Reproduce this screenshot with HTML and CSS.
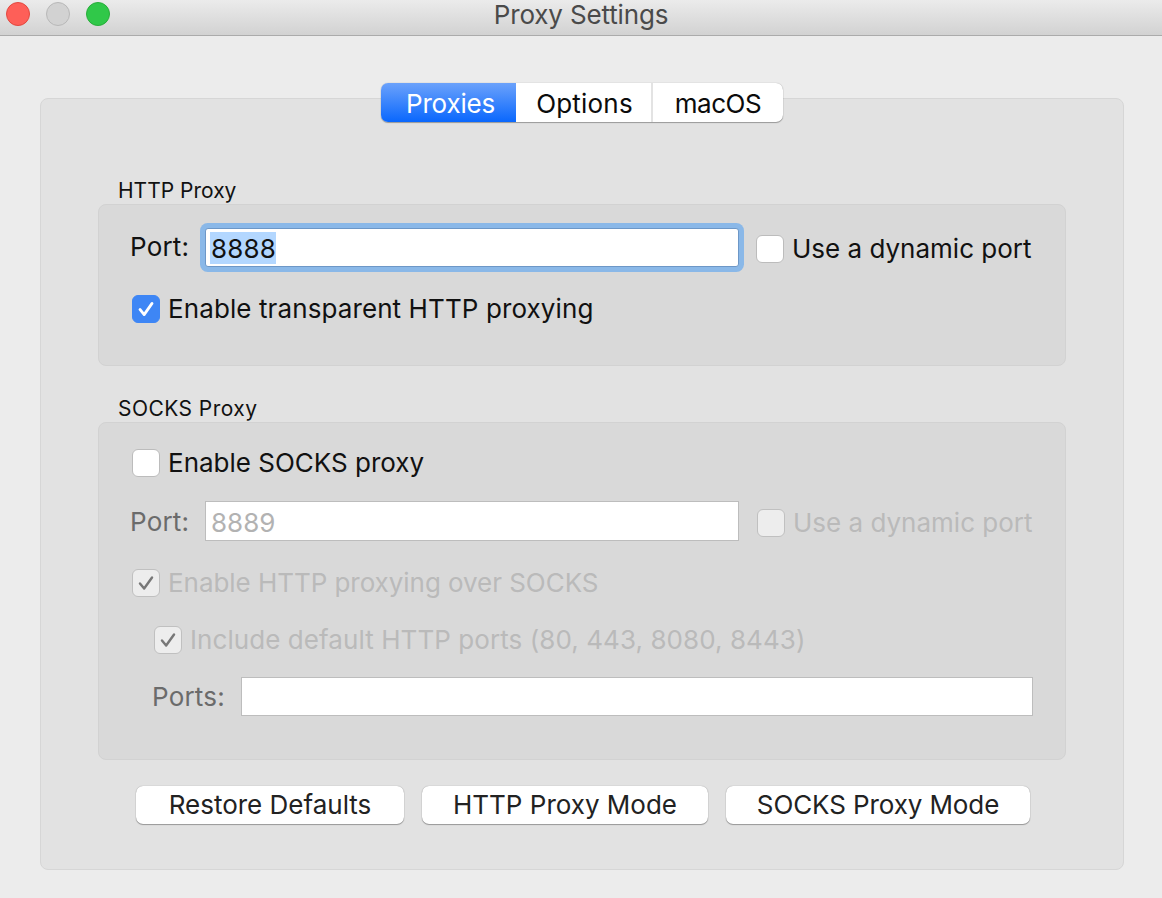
FILE: index.html
```html
<!DOCTYPE html>
<html lang="en">
<head>
<meta charset="utf-8">
<title>Proxy Settings</title>
<link rel="stylesheet" href="styles.css">
</head>
<body>
<div class="window">
  <header class="titlebar">
    <div class="lights">
      <span class="light red"></span>
      <span class="light grey"></span>
      <span class="light green"></span>
    </div>
    <div class="title">Proxy Settings</div>
  </header>
  <main class="content">
    <div class="tabbox">
      <div class="tabs">
        <div class="tab active t1">Proxies</div>
        <div class="tab t2">Options</div>
        <div class="tab t3">macOS</div>
      </div>

      <div class="group-title first">HTTP Proxy</div>
      <section class="group http">
        <div class="row port-row">
          <span class="label">Port:</span>
          <div class="input focused"><span class="sel">8888</span></div>
          <label class="check-wrap">
            <span class="box"></span>
            <span class="check-text">Use a dynamic port</span>
          </label>
        </div>
        <label class="check-wrap transparent">
          <span class="box on">
            <svg viewBox="0 0 28 28" class="tick"><path d="M7.5 14.5 L12 20 L20.5 8" fill="none" stroke="#fff" stroke-width="3" stroke-linecap="round" stroke-linejoin="round"/></svg>
          </span>
          <span class="check-text">Enable transparent HTTP proxying</span>
        </label>
      </section>

      <div class="group-title second">SOCKS Proxy</div>
      <section class="group socks">
        <label class="check-wrap">
          <span class="box"></span>
          <span class="check-text">Enable SOCKS proxy</span>
        </label>
        <div class="row port-row2">
          <span class="label muted">Port:</span>
          <div class="input disabled">8889</div>
          <label class="check-wrap">
            <span class="box dim"></span>
            <span class="check-text faded">Use a dynamic port</span>
          </label>
        </div>
        <label class="check-wrap over">
          <span class="box dim">
            <svg viewBox="0 0 28 28" class="tick"><path d="M7.5 14.5 L12 20 L20.5 8" fill="none" stroke="#777" stroke-width="2.6" stroke-linecap="round" stroke-linejoin="round"/></svg>
          </span>
          <span class="check-text faded">Enable HTTP proxying over SOCKS</span>
        </label>
        <label class="check-wrap include">
          <span class="box dim">
            <svg viewBox="0 0 28 28" class="tick"><path d="M7.5 14.5 L12 20 L20.5 8" fill="none" stroke="#777" stroke-width="2.6" stroke-linecap="round" stroke-linejoin="round"/></svg>
          </span>
          <span class="check-text faded">Include default HTTP ports (80, 443, 8080, 8443)</span>
        </label>
        <div class="row ports-row">
          <span class="label muted">Ports:</span>
          <div class="input ports"></div>
        </div>
      </section>

      <div class="buttons">
        <button class="btn b1">Restore Defaults</button>
        <button class="btn b2">HTTP Proxy Mode</button>
        <button class="btn b3">SOCKS Proxy Mode</button>
      </div>
    </div>
  </main>
</div>
</body>
</html>
```
FILE: styles.css
```css
* { box-sizing: border-box; }
html, body { margin: 0; padding: 0; }
body {
  width: 1162px;
  height: 898px;
  overflow: hidden;
  background: #ececec;
  font-family: Inter, "Liberation Sans", sans-serif;
  font-size: 26px;
  line-height: 30px;
  letter-spacing: 0;
  color: #111;
}
.window { display: flex; flex-direction: column; height: 898px; }

.titlebar {
  height: 36px;
  display: flex;
  align-items: center;
  justify-content: center;
  position: relative;
  background: linear-gradient(#ebebeb, #d2d2d2);
  border-bottom: 1px solid #ababab;
}
.lights { position: absolute; left: 6px; top: 2px; display: flex; gap: 16px; }
.light { width: 24px; height: 24px; border-radius: 50%; border: 1px solid; }
.red { background: #fe5f58; border-color: #e2483f; }
.grey { background: #d2d2d2; border-color: #b8b8b8; }
.green { background: #30c849; border-color: #28ad3a; }
.title { letter-spacing: -0.15px; color: #4a4a4a; margin-top: -5px; }

.content { padding: 62px 38px 28px 40px; }
.tabbox {
  height: 772px;
  background: #e2e2e2;
  border: 1px solid #d6d6d6;
  border-radius: 8px;
  padding: 0 57px;
}
.tabs {
  display: flex;
  width: 402px;
  height: 39px;
  margin: -16px 0 0 283px;
  border-radius: 7px;
  background: #fff;
  box-shadow: 0 0 1px 0 rgba(0,0,0,.35), 0 1px 1px rgba(0,0,0,.3);
}
.tab {
  display: flex;
  align-items: center;
  justify-content: center;
  color: #0b0b0b;
  border-right: 2px solid #e3e3e3;
  padding-top: 2px;
}
.t1 { width: 135px; border-right: 0; border-radius: 7px 0 0 7px; padding-left: 4px; letter-spacing: -0.2px; }
.t2 { width: 137px; letter-spacing: 0.2px; padding-left: 2px; }
.t3 { width: 130px; border-right: 0; letter-spacing: -0.5px; }
.tab.active { background: linear-gradient(#6ba2fb, #0a67fd); color: #fff; }

.group-title { font-size: 21px; color: #111; line-height: 24px; padding-left: 20px; }
.first { margin-top: 57px; }
.second { margin-top: 31px; letter-spacing: 0.45px; }
.group {
  background: #d9d9d9;
  border: 1px solid #d2d2d2;
  border-radius: 8px;
  width: 968px;
  display: flex;
  flex-direction: column;
  align-items: flex-start;
  padding-left: 32px;
}
.http { height: 162px; margin-top: 1px; padding-top: 23px; }
.socks { height: 338px; margin-top: 1px; padding-top: 25px; }

.row { display: flex; align-items: center; }
.label { width: 74px; margin-left: -1px; margin-right: 1px; letter-spacing: 0.2px; }
.muted { color: #6b6b6b; }
.port-row { height: 39px; }
.port-row .check-wrap { margin-left: 16px; position: relative; top: 1px; }
.port-row .label { position: relative; top: -1px; }
.input {
  width: 534px;
  height: 39px;
  background: #fff;
  border: 1px solid #bdbdbd;
  display: flex;
  align-items: center;
  padding-left: 5px;
}
.focused {
  border: 1px solid #6d97c7;
  box-shadow: 0 0 0 5px #8ab8e8;
  border-radius: 3px;
  padding-left: 4px;
}
.sel { background: #b3d7ff; color: #111; padding: 1px 0 0 1px; line-height: 31px; letter-spacing: 0.2px; }
.disabled { color: #b2b2b2; padding-top: 3px; height: 40px; align-self: flex-end; }
.check-wrap { display: flex; align-items: center; gap: 8px; }
.box {
  width: 28px;
  height: 28px;
  border-radius: 6px;
  background: #fff;
  border: 1px solid #bcbcbc;
  flex: none;
  display: block;
  margin-left: 1px;
}
.box.on { background: #3e86f5; border-color: #3e86f5; }
.box.dim { background: #ededed; border-color: #c0c0c0; }
.tick { display: block; width: 26px; height: 26px; }
.faded { color: #bababa; }
.transparent { margin-top: 27px; letter-spacing: 0.1px; }
.port-row2 { margin-top: 24px; height: 39px; }
.port-row2 .check-wrap { margin-left: 17px; position: relative; top: 1px; }
.over { margin-top: 27px; letter-spacing: -0.05px; }
.include { margin-top: 27px; margin-left: 22px; letter-spacing: 0.07px; }
.ports-row { margin-top: 22px; margin-left: 22px; }
.ports-row .label { width: 88px; }
.ports { width: 792px; }

.buttons { display: flex; margin: 26px 0 0 38px; }
.btn {
  height: 38px;
  font: inherit;
  color: #222;
  background: #fff;
  border: 0;
  border-radius: 7px;
  padding: 0 0 1px;
  box-shadow: 0 0 1px rgba(0,0,0,.4), 0 1px 1px rgba(0,0,0,.3);
}
.b1 { width: 268px; }
.b2 { width: 286px; margin-left: 18px; }
.b3 { width: 304px; margin-left: 18px; letter-spacing: -0.1px; }
```
